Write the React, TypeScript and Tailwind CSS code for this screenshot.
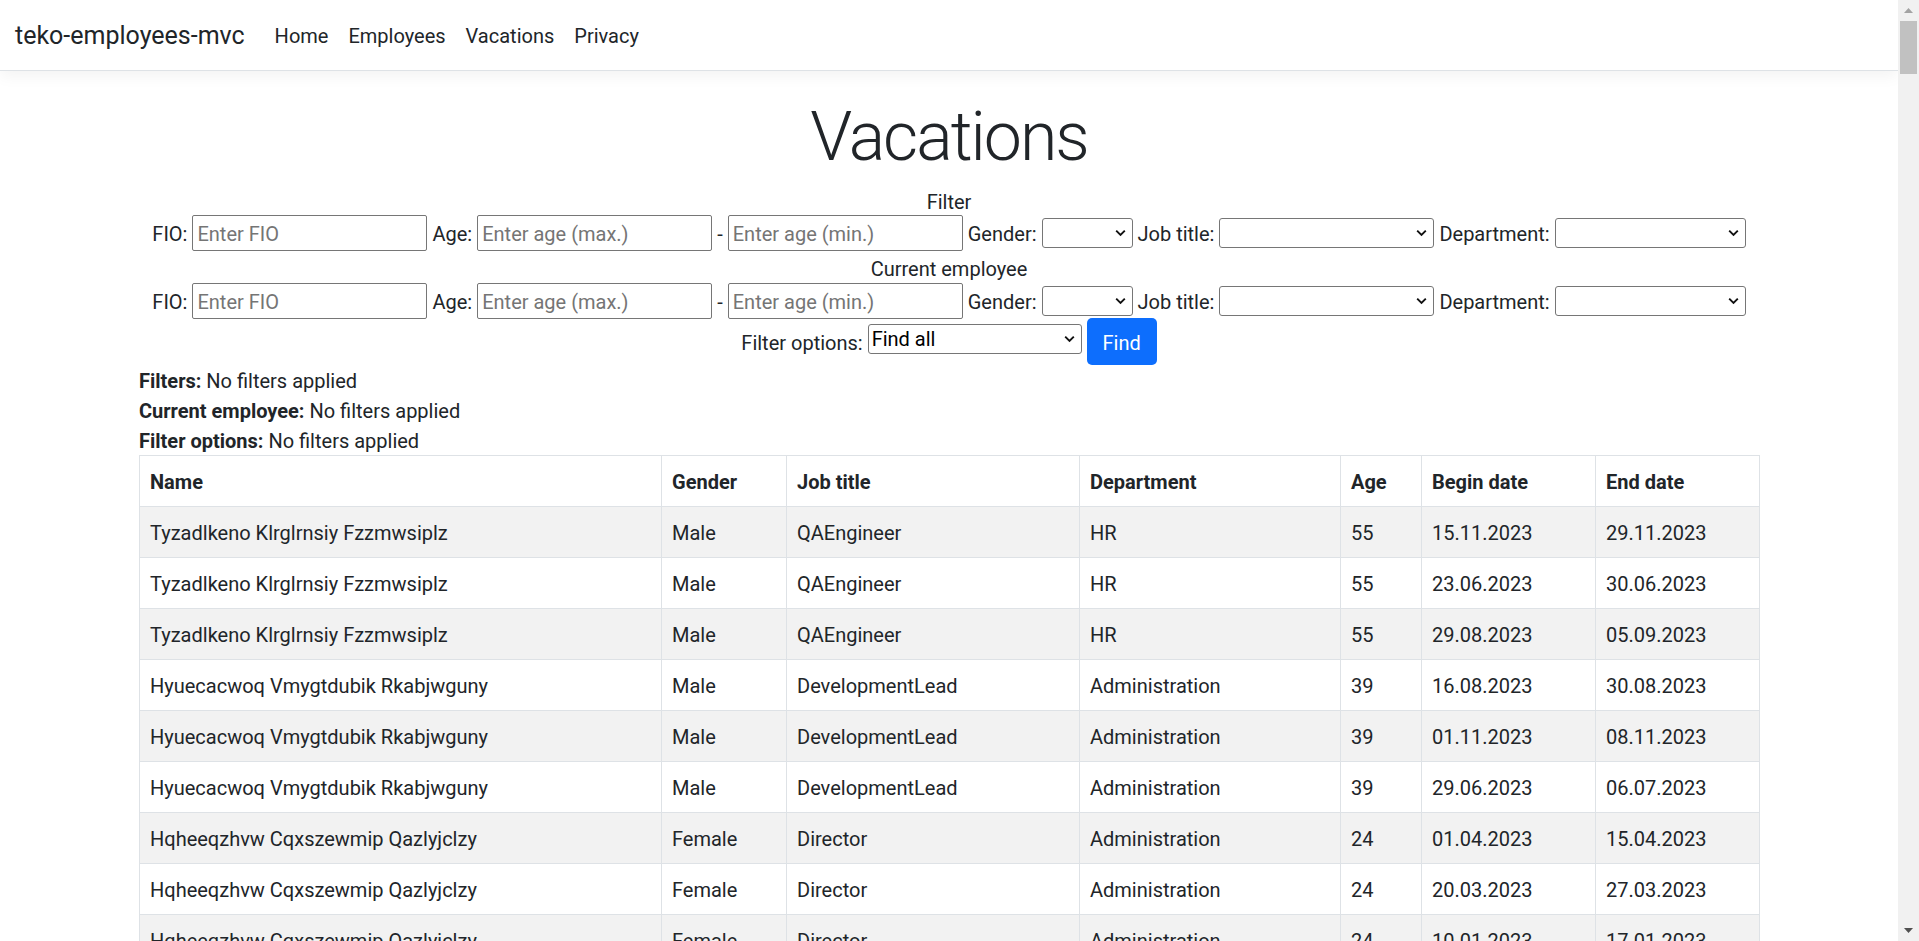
import React from 'react'

const rows = [
  { name: 'Tyzadlkeno Klrglrnsiy Fzzmwsiplz', gender: 'Male', job: 'QAEngineer', dept: 'HR', age: 55, begin: '15.11.2023', end: '29.11.2023' },
  { name: 'Tyzadlkeno Klrglrnsiy Fzzmwsiplz', gender: 'Male', job: 'QAEngineer', dept: 'HR', age: 55, begin: '23.06.2023', end: '30.06.2023' },
  { name: 'Tyzadlkeno Klrglrnsiy Fzzmwsiplz', gender: 'Male', job: 'QAEngineer', dept: 'HR', age: 55, begin: '29.08.2023', end: '05.09.2023' },
  { name: 'Hyuecacwoq Vmygtdubik Rkabjwguny', gender: 'Male', job: 'DevelopmentLead', dept: 'Administration', age: 39, begin: '16.08.2023', end: '30.08.2023' },
  { name: 'Hyuecacwoq Vmygtdubik Rkabjwguny', gender: 'Male', job: 'DevelopmentLead', dept: 'Administration', age: 39, begin: '01.11.2023', end: '08.11.2023' },
  { name: 'Hyuecacwoq Vmygtdubik Rkabjwguny', gender: 'Male', job: 'DevelopmentLead', dept: 'Administration', age: 39, begin: '29.06.2023', end: '06.07.2023' },
  { name: 'Hqheeqzhvw Cqxszewmip Qazlyjclzy', gender: 'Female', job: 'Director', dept: 'Administration', age: 24, begin: '01.04.2023', end: '15.04.2023' },
  { name: 'Hqheeqzhvw Cqxszewmip Qazlyjclzy', gender: 'Female', job: 'Director', dept: 'Administration', age: 24, begin: '20.03.2023', end: '27.03.2023' },
  { name: 'Hqheeqzhvw Cqxszewmip Qazlyjclzy', gender: 'Female', job: 'Director', dept: 'Administration', age: 24, begin: '10.01.2023', end: '17.01.2023' },
]

function Chevron() {
  return (
    <svg className="pointer-events-none absolute right-[7px] top-1/2 -translate-y-1/2" width="11" height="7" viewBox="0 0 11 7">
      <path d="M1.2 1.2l4.3 4.3 4.3-4.3" stroke="#111" strokeWidth="1.9" fill="none" />
    </svg>
  )
}

function Select({ width, value }: { width: string; value?: string }) {
  return (
    <div className={`relative ${width}`}>
      <select className="h-[30px] w-full appearance-none rounded-[3px] border border-[#767676] bg-white pl-[3px] text-[20px] leading-[26px] text-black">
        <option>{value ?? ''}</option>
      </select>
      <Chevron />
    </div>
  )
}

function Input({ placeholder }: { placeholder: string }) {
  return (
    <input
      className="h-[36px] w-[235px] rounded-[2px] border border-[#767676] bg-white px-[4px] pt-[2px] text-[20px] placeholder:text-[#757575]"
      placeholder={placeholder}
    />
  )
}

function FilterRow({ height }: { height: string }) {
  return (
    <div className={`flex items-center justify-center gap-[5px] ${height}`}>
      <span className="pt-[2px]">FIO:</span>
      <Input placeholder="Enter FIO" />
      <span className="pt-[2px]">Age:</span>
      <Input placeholder="Enter age (max.)" />
      <span className="pt-[2px]">-</span>
      <Input placeholder="Enter age (min.)" />
      <span className="pt-[2px]">Gender:</span>
      <Select width="w-[91px]" />
      <span className="pt-[2px]">Job title:</span>
      <Select width="w-[215px]" />
      <span className="pt-[2px]">Department:</span>
      <Select width="w-[191px]" />
    </div>
  )
}

export default function App() {
  return (
    <div className="flex h-[941px] overflow-hidden bg-white font-['Segoe_UI',Roboto,'Liberation_Sans',sans-serif] text-[20px] leading-[30px] text-[#212529]">
      <div className="min-w-0 flex-1 overflow-hidden">
        <nav className="mb-[20px] flex h-[71px] items-center border-b border-[#dee2e6] bg-white px-[15px] shadow-[0_5px_15px_rgba(0,0,0,0.05)]">
          <span className="mr-[20px] pt-[2px] text-[25px] leading-[37.5px]">teko-employees-mvc</span>
          <ul className="flex pt-[2px]">
            {['Home', 'Employees', 'Vacations', 'Privacy'].map((l) => (
              <li key={l} className="px-[10px] py-[10px]">{l}</li>
            ))}
          </ul>
        </nav>

        <main className="mx-auto w-[1650px] px-[15px]">
          <h1 className="mb-[10px] pt-[9px] text-center text-[68px] font-light leading-[75px] tracking-[-2px]">Vacations</h1>

          <form className="text-center">
            <div className="h-[30px] pt-[2px]">Filter</div>
            <FilterRow height="h-[36px]" />
            <div className="h-[32px] pt-[3px]">Current employee</div>
            <FilterRow height="h-[35px]" />
            <div className="flex h-[47px] items-start justify-center gap-[5px]">
              <span className="pt-[2px] leading-[47px]">Filter options:</span>
              <div className="mt-[6px]">
                <Select width="w-[214px]" value="Find all" />
              </div>
              <button type="button" className="h-[47px] w-[70px] rounded-[5px] bg-[#0d6efd] pt-[2px] text-white">Find</button>
            </div>
          </form>

          <div className="pt-[1px]">
            <div><b>Filters:</b> No filters applied</div>
            <div><b>Current employee:</b> No filters applied</div>
            <div className="-mb-[1px]"><b>Filter options:</b> No filters applied</div>
          </div>

          <table className="w-[1620px] table-fixed border-collapse">
            <colgroup>
              <col className="w-[522px]" />
              <col className="w-[125px]" />
              <col className="w-[293px]" />
              <col className="w-[261px]" />
              <col className="w-[81px]" />
              <col className="w-[174px]" />
              <col className="w-[164px]" />
            </colgroup>
            <thead>
              <tr>
                {['Name', 'Gender', 'Job title', 'Department', 'Age', 'Begin date', 'End date'].map((h) => (
                  <th key={h} className="border border-[#dee2e6] px-[10px] pt-[11px] pb-[9px] text-left font-bold">{h}</th>
                ))}
              </tr>
            </thead>
            <tbody>
              {rows.map((r, i) => (
                <tr key={i} className={i % 2 === 0 ? 'bg-[#f2f2f2]' : 'bg-white'}>
                  {[r.name, r.gender, r.job, r.dept, r.age, r.begin, r.end].map((c, j) => (
                    <td key={j} className="border border-[#dee2e6] px-[10px] pt-[11px] pb-[9px]">{c}</td>
                  ))}
                </tr>
              ))}
            </tbody>
          </table>
        </main>
      </div>

      {/* fake window scrollbar */}
      <div className="flex w-[21px] flex-col bg-[#f1f1f1]">
        <div className="flex h-[21px] items-center justify-center">
          <svg width="9" height="5" viewBox="0 0 9 5"><polygon points="0,5 4.5,0 9,5" fill="#a3a3a3" /></svg>
        </div>
        <div className="mx-[2px] h-[53px] bg-[#c1c1c1]" />
        <div className="flex-1" />
        <div className="flex h-[21px] items-center justify-center">
          <svg width="9" height="5" viewBox="0 0 9 5"><polygon points="0,0 9,0 4.5,5" fill="#505050" /></svg>
        </div>
      </div>
    </div>
  )
}
